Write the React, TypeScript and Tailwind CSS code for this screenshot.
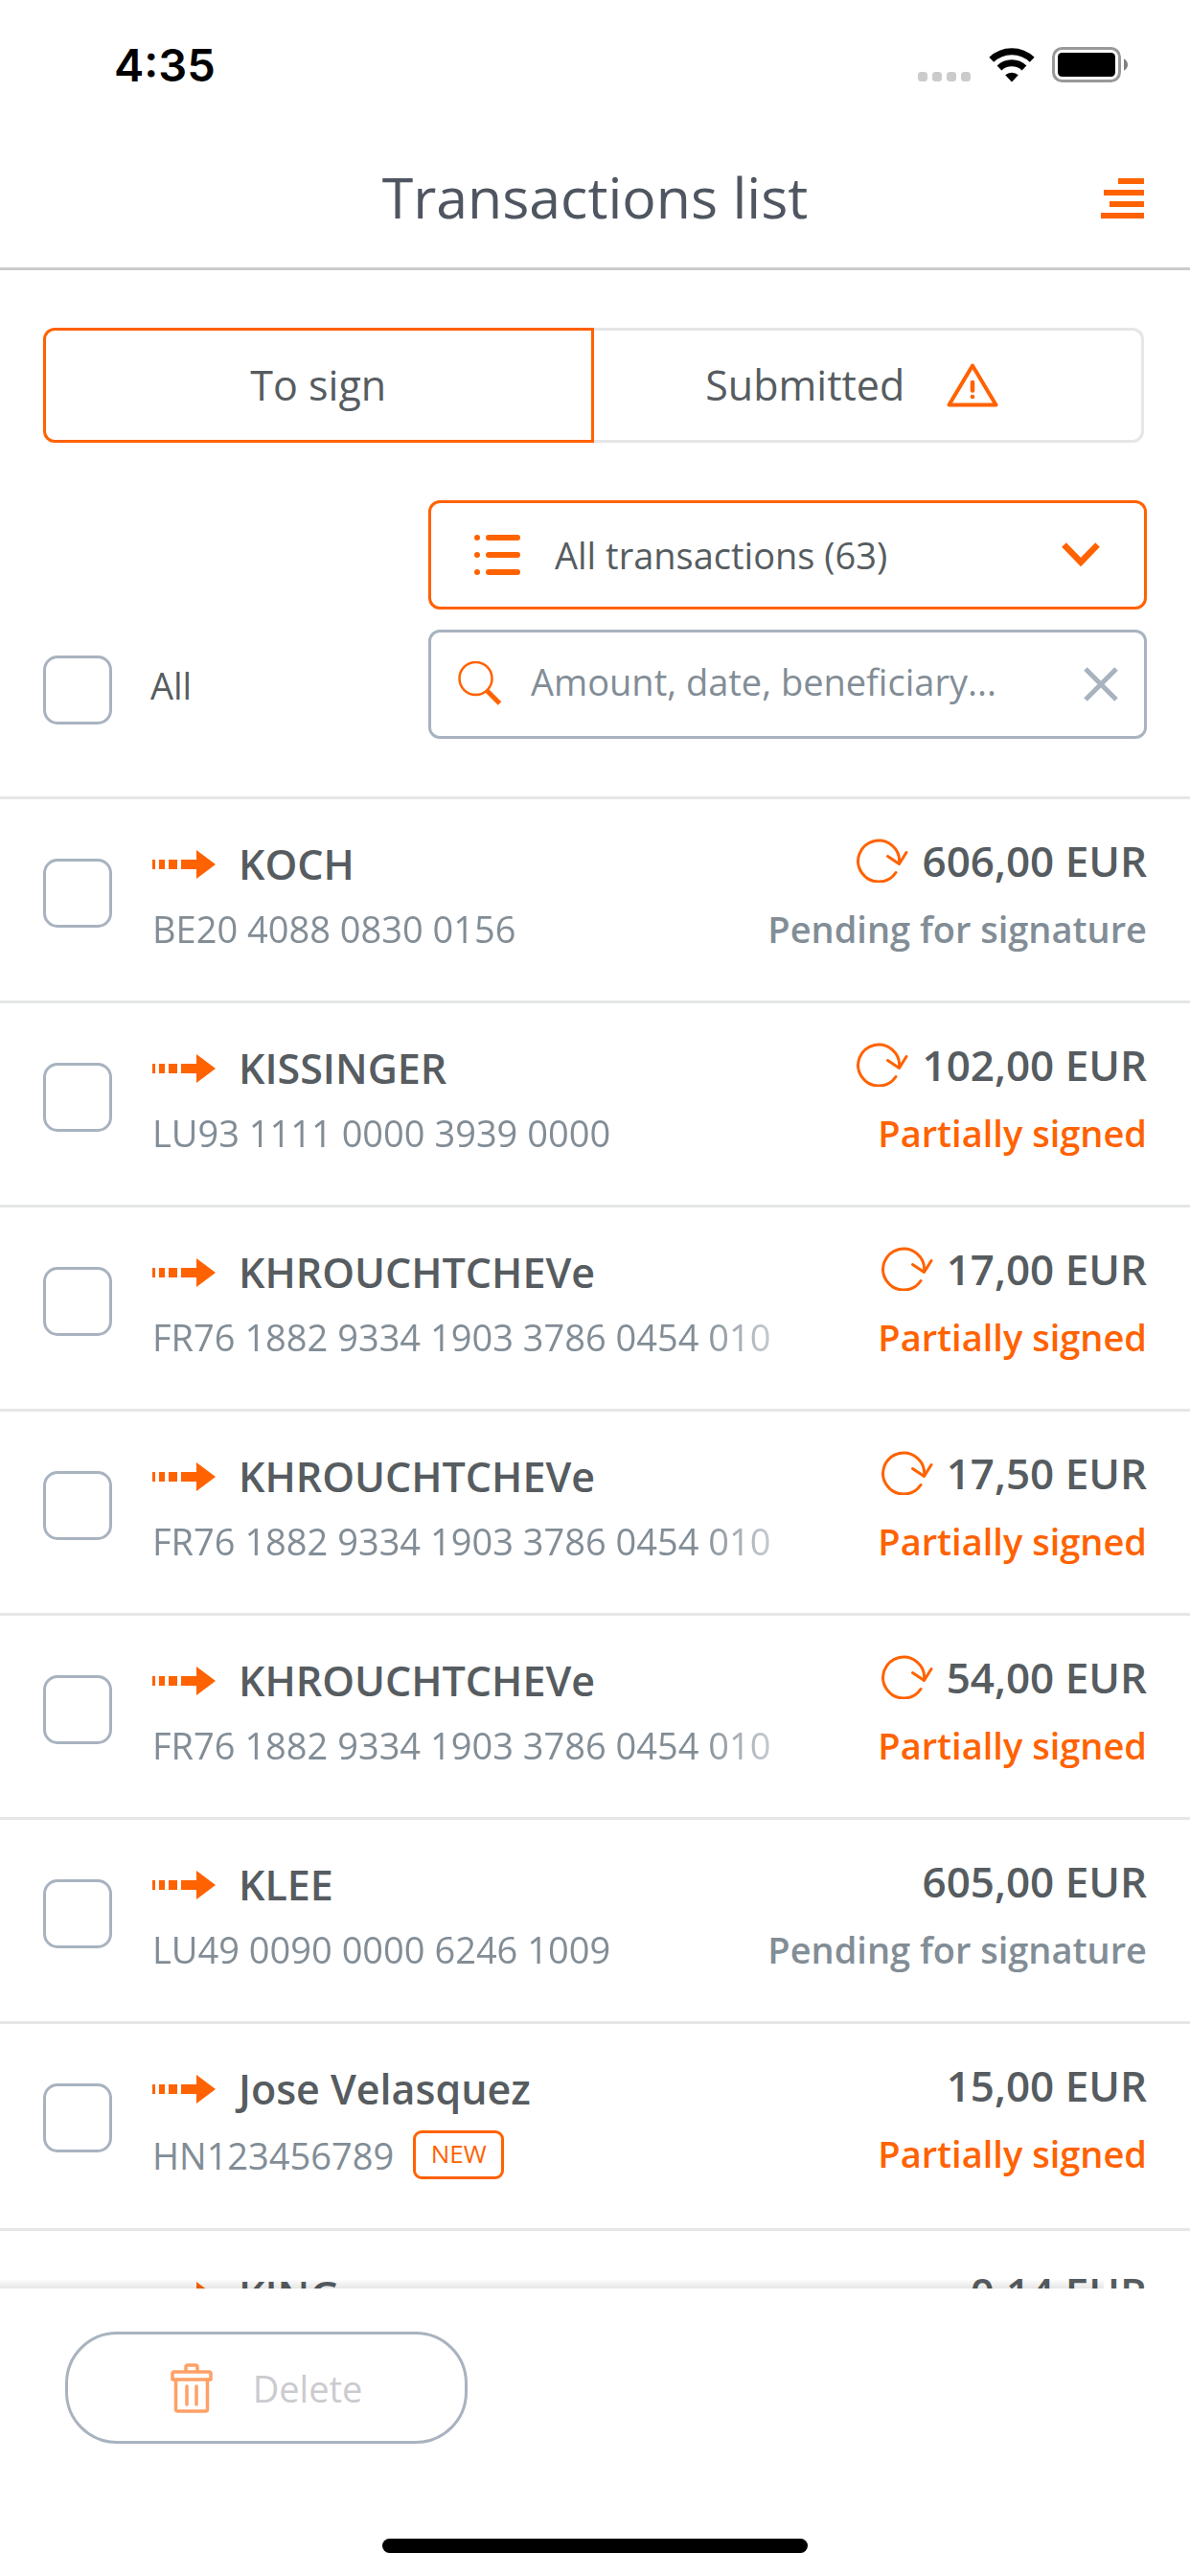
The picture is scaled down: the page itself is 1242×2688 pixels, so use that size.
import { useState } from "react";

type Transaction = {
  id: number;
  name: string;
  account?: string;
  amount: string;
  status?: "Pending for signature" | "Partially signed";
  recurring?: boolean;
  isNew?: boolean;
};

const transactions: Transaction[] = [
  { id: 1, name: "KOCH", account: "BE20 4088 0830 0156", amount: "606,00 EUR", status: "Pending for signature", recurring: true },
  { id: 2, name: "KISSINGER", account: "LU93 1111 0000 3939 0000", amount: "102,00 EUR", status: "Partially signed", recurring: true },
  { id: 3, name: "KHROUCHTCHEVe", account: "FR76 1882 9334 1903 3786 0454 010", amount: "17,00 EUR", status: "Partially signed", recurring: true },
  { id: 4, name: "KHROUCHTCHEVe", account: "FR76 1882 9334 1903 3786 0454 010", amount: "17,50 EUR", status: "Partially signed", recurring: true },
  { id: 5, name: "KHROUCHTCHEVe", account: "FR76 1882 9334 1903 3786 0454 010", amount: "54,00 EUR", status: "Partially signed", recurring: true },
  { id: 6, name: "KLEE", account: "LU49 0090 0000 6246 1009", amount: "605,00 EUR", status: "Pending for signature" },
  { id: 7, name: "Jose Velasquez", account: "HN123456789", amount: "15,00 EUR", status: "Partially signed", isNew: true },
  { id: 8, name: "KING", amount: "0,14 EUR" },
];

const checkboxClass =
  "size-[72px] shrink-0 appearance-none rounded-[15px] border-3 border-[#a8b3bf] bg-white checked:border-[#ff6200] checked:bg-[#ff6200]";

const StatusBar = () => (
  <div className="flex h-[135px] items-center justify-between pl-[119px] pr-[65px]">
    <p className="font-[Inter,sans-serif] text-[47px] leading-[56px] font-semibold text-black">4:35</p>
    <div className="flex items-end">
      <svg className="mr-[18px] h-[37px] w-[56px]" viewBox="0 0 56 37" fill="#cbcbcb">
        <rect x="0" y="26" width="10" height="10" rx="3.5" />
        <rect x="15" y="26" width="10" height="10" rx="3.5" />
        <rect x="30" y="26" width="10" height="10" rx="3.5" />
        <rect x="45" y="26" width="10" height="10" rx="3.5" />
      </svg>
      <svg className="mr-[18px] h-[37px] w-[48px]" viewBox="0 0 48 37">
        <path d="M2.8 13.2A30.5 30.5 0 0 1 45.2 13.2" fill="none" stroke="#000" strokeWidth="7" />
        <path d="M11 22A19 19 0 0 1 37 22" fill="none" stroke="#000" strokeWidth="7" />
        <path d="M24 36.5L17.2 29.3A10 10 0 0 1 30.8 29.3Z" />
      </svg>
      <svg className="h-[37px] w-[79px]" viewBox="0 0 79 37">
        <rect x="1.5" y="1.5" width="69" height="34" rx="9" fill="none" stroke="#999" strokeWidth="3" />
        <rect x="6" y="6" width="60" height="25" rx="4.5" />
        <path d="M75 12.2Q79 14.5 79 18.5Q79 22.5 75 24.8Z" fill="#808080" />
      </svg>
    </div>
  </div>
);

const TransferArrow = () => (
  <svg className="h-[30px] w-[66px] shrink-0" viewBox="0 0 66 30" fill="#ff6200">
    <rect x="0" y="10" width="3" height="10" />
    <rect x="7" y="10" width="6" height="10" />
    <rect x="17" y="10" width="9" height="10" />
    <path d="M30 10H46V0L66 15L46 30V20H30Z" />
  </svg>
);

const RecurringIcon = () => (
  <svg
    className="h-[46px] w-[54px]"
    viewBox="0 0 54 46"
    fill="none"
    stroke="#ff6200"
    strokeWidth="3"
    strokeLinecap="round"
    strokeLinejoin="round"
  >
    <path d="M41 35.5A21.5 21.5 0 1 1 44.5 26" />
    <path d="M32.5 18.5L44.5 26.5L52 14.5" />
  </svg>
);

const TransactionRow = ({ transaction }: { transaction: Transaction }) => {
  const { id, name, account, amount, status, recurring, isNew } = transaction;

  return (
    <li className="flex items-start border-t-3 border-[#e5e6e7] px-[45px] pt-[36px] pb-[40px]">
      <input type="checkbox" aria-label={`Select ${name} ${id}`} className={`${checkboxClass} mt-[26px]`} />
      <div className="ml-[42px] min-w-0 flex-1">
        <div className="flex h-[64px] items-center gap-[24px]">
          <TransferArrow />
          <p className="text-[43px] leading-[64px] font-semibold whitespace-nowrap text-[#565c60]">{name}</p>
        </div>
        <div className="flex min-h-[70px] items-center gap-[20px]">
          {account && (
            <p
              className={`text-[38px] leading-[66px] whitespace-nowrap text-[#828d96] ${
                isNew ? "" : "max-w-[650px] [mask-image:linear-gradient(to_right,black_570px,transparent_710px)]"
              }`}
            >
              {account}
            </p>
          )}
          {isNew && (
            <span className="my-[11px] flex h-[51px] w-[95px] items-center justify-center rounded-[9px] border-3 border-[#ff6200] pb-[3px] text-[26px] leading-[36px] text-[#ff6200]">
              NEW
            </span>
          )}
        </div>
      </div>
      <div className="flex flex-col items-end gap-[10px]">
        <div className="flex h-[56px] items-center gap-[14px]">
          {recurring && <RecurringIcon />}
          <p className="text-[44px] leading-[56px] font-semibold whitespace-nowrap text-[#565c60]">{amount}</p>
        </div>
        {status && (
          <p
            className={`text-[38px] leading-[66px] font-semibold whitespace-nowrap ${
              status === "Partially signed" ? "text-[#ff6200]" : "text-[#828d96]"
            }`}
          >
            {status}
          </p>
        )}
      </div>
    </li>
  );
};

const App = () => {
  const [tab, setTab] = useState("sign");
  const [query, setQuery] = useState("");

  return (
    <div className="flex h-screen flex-col bg-white font-['Open_Sans','Noto_Sans',sans-serif] text-[#565c60]">
      <header className="shrink-0 border-b-3 border-[#cbcbcd]">
        <StatusBar />
        <div className="grid h-[144px] grid-cols-[1fr_auto_1fr] items-center px-[48px]">
          <h1 className="col-start-2 pb-[4px] text-[59px] leading-[84px] text-[#4f5661]">Transactions list</h1>
          <button type="button" aria-label="Menu" className="justify-self-end">
            <svg className="h-[42px] w-[45px]" viewBox="0 0 45 42" fill="#ff6200">
              <rect x="18" y="0" width="27" height="6" />
              <rect x="3" y="12" width="42" height="6" />
              <rect x="9" y="24" width="36" height="6" />
              <rect x="0" y="36" width="45" height="6" />
            </svg>
          </button>
        </div>
      </header>

      <main className="min-h-0 flex-1 overflow-hidden">
        <div className="mt-[60px] mr-[48px] ml-[45px] grid grid-cols-2">
          <button
            type="button"
            onClick={() => setTab("sign")}
            className={`h-[120px] rounded-l-[12px] border-3 text-[43px] leading-[60px] ${
              tab === "sign" ? "border-[#ff6200]" : "border-r-0 border-[#e5e6e7]"
            }`}
          >
            To sign
          </button>
          <button
            type="button"
            onClick={() => setTab("submitted")}
            className={`flex h-[120px] items-center justify-center gap-[44px] rounded-r-[12px] border-3 pr-[32px] text-[43px] leading-[60px] ${
              tab === "submitted" ? "border-[#ff6200]" : "border-l-0 border-[#e5e6e7]"
            }`}
          >
            Submitted
            <svg className="h-[46px] w-[54px]" viewBox="0 0 54 46" fill="none" stroke="#ff6200" strokeLinecap="round" strokeLinejoin="round">
              <path d="M27 2.5L51.5 43.5H2.5Z" strokeWidth="4" />
              <path d="M27 20V28.5" strokeWidth="4.5" />
              <circle cx="27" cy="35" r="2.3" fill="#ff6200" stroke="none" />
            </svg>
          </button>
        </div>

        <div className="mt-[60px] mb-[60px] flex items-end justify-between px-[45px]">
          <label className="mb-[15px] flex items-center gap-[40px] text-[38px] leading-[54px]">
            <input type="checkbox" className={checkboxClass} />
            <span className="pb-[10px]">All</span>
          </label>

          <div className="flex w-[750px] flex-col gap-[21px]">
            <div className="flex h-[114px] items-center rounded-[12px] border-3 border-[#ff6200] pr-[46px] pl-[45px]">
              <svg className="h-[42px] w-[48px] shrink-0" viewBox="0 0 48 42" fill="#ff6200">
                <circle cx="3" cy="3" r="3" />
                <circle cx="3" cy="21" r="3" />
                <circle cx="3" cy="39" r="3" />
                <rect x="12" y="0" width="36" height="6" rx="3" />
                <rect x="12" y="18" width="36" height="6" rx="3" />
                <rect x="12" y="36" width="36" height="6" rx="3" />
              </svg>
              <select
                aria-label="Transaction filter"
                className="ml-[36px] h-[60px] min-w-0 flex-1 appearance-none bg-transparent text-[38px] leading-[60px] outline-none"
              >
                <option>All transactions (63)</option>
              </select>
              <svg className="h-[26px] w-[40px] shrink-0" viewBox="0 0 40 26" fill="none" stroke="#ff6200" strokeWidth="6.5">
                <path d="M2.5 2.5L20 20.5L37.5 2.5" />
              </svg>
            </div>

            <div className="flex h-[114px] items-center rounded-[12px] border-3 border-[#a8b3bf] pr-[27px] pl-[28px]">
              <svg className="h-[48px] w-[46px] shrink-0" viewBox="0 0 46 48" fill="none" stroke="#ff6200">
                <circle cx="18.5" cy="18" r="17" strokeWidth="2.5" />
                <path d="M29.5 30L43.5 44" strokeWidth="5" />
              </svg>
              <input
                type="text"
                aria-label="Search transactions"
                placeholder="Amount, date, beneficiary..."
                value={query}
                onChange={(e) => setQuery(e.target.value)}
                className="ml-[30px] h-[60px] min-w-0 flex-1 bg-transparent pb-[6px] text-[38px] leading-[54px] outline-none placeholder:text-[#828d96]"
              />
              <button type="button" aria-label="Clear search" onClick={() => setQuery("")}>
                <svg className="h-[36px] w-[36px]" viewBox="0 0 36 36" fill="none" stroke="#a8b3bf" strokeWidth="5">
                  <path d="M2 2L34 34M34 2L2 34" />
                </svg>
              </button>
            </div>
          </div>
        </div>

        <ul>
          {transactions.map((transaction) => (
            <TransactionRow key={transaction.id} transaction={transaction} />
          ))}
        </ul>
      </main>

      <footer className="relative flex shrink-0 flex-col bg-white pt-[45px] pb-[24px]">
        {/* soft edge over the scrolled list */}
        <div className="absolute -top-[10px] right-[90px] left-0 h-[10px] bg-linear-to-b from-black/0 to-black/10" />
        <button
          type="button"
          disabled
          className="ml-[68px] flex h-[117px] w-[420px] items-center justify-center gap-[42px] rounded-[54px] border-3 border-[#a8b3bf] text-[38px] leading-[60px] text-[#cbcbcf]"
        >
          <svg className="h-[52px] w-[44px]" viewBox="0 0 44 52" fill="none" stroke="#ffa066" strokeWidth="3.5" strokeLinecap="round" strokeLinejoin="round">
            <path d="M2 17V11Q2 9 4 9H40Q42 9 42 11V17Z" />
            <path d="M16 8V4Q16 2 18 2H26Q28 2 28 4V8" />
            <path d="M5.5 18V48Q5.5 50 7.5 50H36.5Q38.5 50 38.5 48V18" />
            <path d="M17 24V43M27 24V43" />
          </svg>
          Delete
        </button>
        <div className="mt-[99px] h-[15px] w-[444px] self-center rounded-full bg-black" />
      </footer>
    </div>
  );
};

export default App;
